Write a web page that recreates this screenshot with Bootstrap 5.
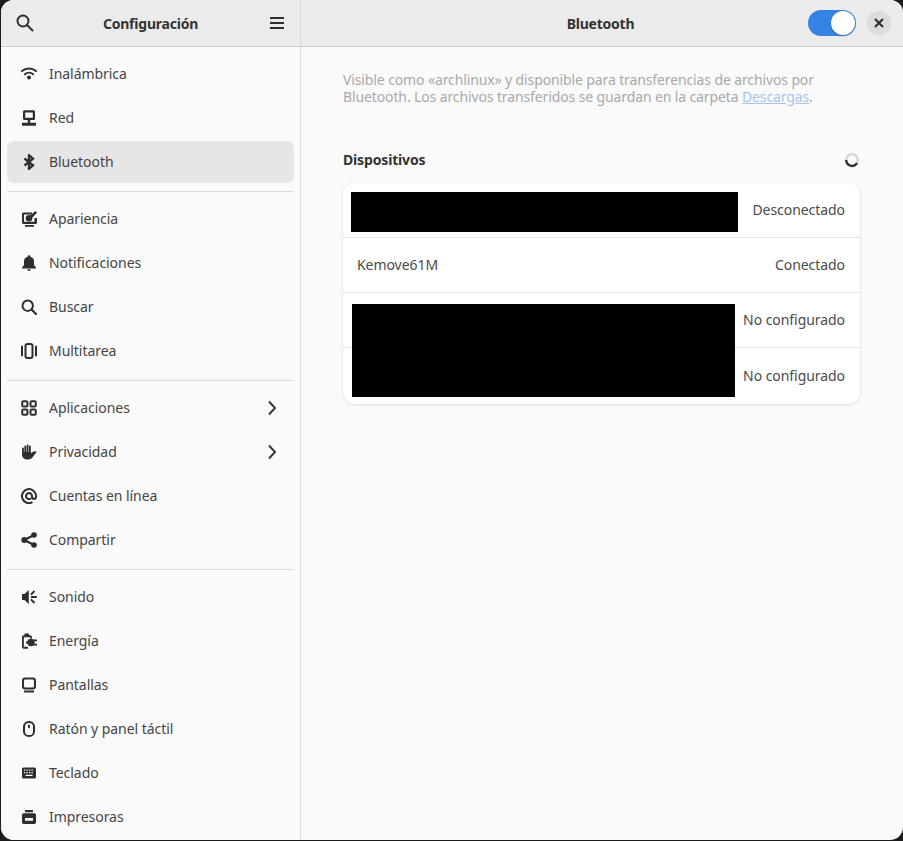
<!DOCTYPE html>
<html lang="es">
<head>
<meta charset="utf-8">
<title>Configuración</title>
<link href="https://cdn.jsdelivr.net/npm/bootstrap@5.3.0/dist/css/bootstrap.min.css" rel="stylesheet">
<style>
html,body{height:100%;margin:0;background:#1c1c1c;overflow:hidden}
body{font-family:"Noto Sans","Liberation Sans",sans-serif;font-size:14px;color:#3d3d3d}
.gwin{height:840px;margin-left:1px;background:#fafafa;border-radius:13px;overflow:hidden}
.side{width:300px;flex:0 0 300px;border-right:1px solid #d9d9d9;background:#fafafa}
.hbar{height:47px;background:#ebebeb;border-bottom:1px solid #d0d0d0;flex:0 0 47px}
.htitle{font-weight:700;color:#333;font-size:14px;letter-spacing:-.22px}
.slist{padding:5px 6px 0 6px}
.srow{height:44px;padding:0 14px;color:#454545;position:relative;letter-spacing:-.05px}
.srow span{padding-bottom:2px}
.srow.sel::before{content:"";position:absolute;left:0;right:0;top:1px;bottom:1px;background:#e6e6e6;border-radius:7px;z-index:0}
.srow>*{position:relative;z-index:1}
.sico{width:16px;height:16px;flex:0 0 16px;margin-right:12px;fill:#2e2e2e;stroke:none}
.schev{width:16px;height:16px;margin-left:auto}
.sline{height:1px;background:#dcdcdc;margin:7px 0 5px 0}
.main{min-width:0}
.mbody{padding:24px 43px 0 42px}
.dtext{color:#a9a9a9;line-height:17px;margin:0;height:34px;letter-spacing:-.12px}
.dtext a{color:#a5c4ee;display:inline-block;line-height:17px}
.dhead{margin-top:44px;height:34px;font-weight:700;color:#333;letter-spacing:-.16px}
.dspin{margin-top:3px}
.dcard{position:relative;border-radius:12px;background:#fff;box-shadow:0 0 1px rgba(0,0,0,.18),0 1px 3px rgba(0,0,0,.1);overflow:hidden;border:0}
.drow{height:55px;padding:0 15px 0 14px;border-bottom:1px solid #e4e4e4;background:#fff;color:#4a4a4a;letter-spacing:-.06px}
.drow span{padding-bottom:2px}
.drow:last-of-type{border-bottom:0;height:56px}
.blk{position:absolute;background:#000}
.blk1{left:8px;top:9px;width:387px;height:40px}
.blk2{left:9px;top:121px;width:383px;height:93px}
.gtog{width:48px;height:26px;border-radius:13px;background:#3584e4;position:relative}
.gtog::after{content:"";position:absolute;right:1px;top:1px;width:24px;height:24px;border-radius:50%;background:#fff;box-shadow:0 1px 2px rgba(0,0,0,.3)}
.gclose{width:24px;height:24px;border-radius:50%;background:#dcdcdc;margin-left:11px;margin-right:12px}
.gtitle{left:0;right:0;text-align:center;position:absolute}
.gtitle2{right:3px}
.hsearch{margin-left:-1px}
</style>
</head>
<body>
<div class="gwin d-flex">
  <aside class="side d-flex flex-column">
    <header class="hbar d-flex align-items-center justify-content-between position-relative px-3">
      <svg class="hsearch" width="18" height="18" viewBox="0 0 18 18" fill="none" stroke="#2e2e2e" stroke-width="2"><circle cx="7" cy="7" r="5.5"/><path d="M11 11l5.500 5.500" stroke-linecap="round"/></svg>
      <span class="htitle gtitle">Configuración</span>
      <svg width="14" height="12" viewBox="0 0 14 12" fill="none" stroke="#2e2e2e" stroke-width="2"><path d="M0 1h14M0 6h14M0 11h14"/></svg>
    </header>
    <div class="slist">
      <div class="srow d-flex align-items-center"><svg class="sico" viewBox="0 0 16 16"><g fill="none" stroke="#2e2e2e" stroke-width="2" stroke-linecap="round"><path d="M1 5C4.800 1.700 11.200 1.700 15 5"/><path d="M3.800 8.200C6.200 6.200 9.800 6.200 12.200 8.200"/></g><circle cx="8" cy="11.500" r="2"/></svg><span>Inalámbrica</span></div>
      <div class="srow d-flex align-items-center"><svg class="sico" viewBox="0 0 16 16"><path fill-rule="evenodd" d="M3.500.3h9A1.500 1.500 0 0 1 14 1.800v6.700A1.500 1.500 0 0 1 12.500 10H9.200v2.800H15v2.900H1v-2.900h5.800V10H3.500A1.500 1.500 0 0 1 2 8.500V1.800A1.500 1.500 0 0 1 3.500.3zM4.200 2.400v5.300h7.600V2.400z"/></svg><span>Red</span></div>
      <div class="srow sel d-flex align-items-center"><svg class="sico" viewBox="0 0 16 16"><path fill="none" stroke="#2e2e2e" stroke-width="2.300" d="M3.500 4.500L12 11.300 8 14.800V1.200l4 3.500-8.500 6.800"/></svg><span>Bluetooth</span></div>
      <div class="sline"></div>
      <div class="srow d-flex align-items-center"><svg class="sico" viewBox="0 0 16 16"><path fill-rule="evenodd" d="M2.500 1.500H11v2H3v7.300h10.500V7H16v4.500a1.500 1.500 0 0 1-1.500 1.500h-12A1.500 1.500 0 0 1 1 11.500v-8.500A1.500 1.500 0 0 1 2.500 1.500zM4 14h9v1.700H4z"/><circle cx="8" cy="7.300" r="3.300"/><path d="M8.500 5.200l5.800-5.200 1.700 1.800-5.600 5.600z"/></svg><span>Apariencia</span></div>
      <div class="srow d-flex align-items-center"><svg class="sico" viewBox="0 0 16 16"><path d="M8 .3a1.400 1.400 0 0 1 1.400 1.400A4.800 4.800 0 0 1 13 6.300v3.700l2 2.500v.9H1v-.9L3 10V6.300A4.800 4.800 0 0 1 6.600 1.700 1.400 1.400 0 0 1 8 .3zM6.300 14.300h3.400a1.700 1.700 0 0 1-3.400 0z"/></svg><span>Notificaciones</span></div>
      <div class="srow d-flex align-items-center"><svg class="sico" viewBox="0 0 16 16"><circle cx="6.700" cy="6.700" r="5.200" fill="none" stroke="#2e2e2e" stroke-width="2"/><path d="M10.500 10.500l4.500 4.500" stroke="#2e2e2e" stroke-width="2.200" stroke-linecap="round"/></svg><span>Buscar</span></div>
      <div class="srow d-flex align-items-center"><svg class="sico" viewBox="0 0 16 16"><rect x="4.500" y="1" width="7" height="14" rx="2" fill="none" stroke="#2e2e2e" stroke-width="2"/><path d="M1 3.500v9M15 3.500v9" stroke="#2e2e2e" stroke-width="2" stroke-linecap="round"/></svg><span>Multitarea</span></div>
      <div class="sline"></div>
      <div class="srow d-flex align-items-center"><svg class="sico" viewBox="0 0 16 16"><g fill="none" stroke="#2e2e2e" stroke-width="2"><rect x="1.200" y="1.200" width="5.300" height="5.300" rx="1.300"/><rect x="9.500" y="1.200" width="5.300" height="5.300" rx="1.300"/><rect x="1.200" y="9.500" width="5.300" height="5.300" rx="1.300"/><rect x="9.500" y="9.500" width="5.300" height="5.300" rx="1.300"/></g></svg><span>Aplicaciones</span><svg class="schev" viewBox="0 0 16 16" fill="none" stroke="#3a3a3a" stroke-width="2"><path d="M5 1.500L11 8l-6 6.500"/></svg></div>
      <div class="srow d-flex align-items-center"><svg class="sico" viewBox="0 0 16 16"><path d="M2 4.500v6M4.300 2.500v8M6.600 1.500v9M8.900 2.500v8" stroke="#2e2e2e" stroke-width="1.800" stroke-linecap="round" fill="none"/><path d="M1.100 8H9.800v1.500l2.400-1.700c1-.7 2.600-.5 3.500.3-1.500 1.500-2.400 3-3.500 4.500C11 14.500 9.500 15.500 7 15.500 3 15.500 1.100 13.500 1.100 10.500z"/></svg><span>Privacidad</span><svg class="schev" viewBox="0 0 16 16" fill="none" stroke="#3a3a3a" stroke-width="2"><path d="M5 1.500L11 8l-6 6.500"/></svg></div>
      <div class="srow d-flex align-items-center"><svg class="sico" viewBox="0 0 16 16"><path fill="none" stroke="#2e2e2e" stroke-width="2" d="M11.500 14.200A7 7 0 1 1 15 8v.6c0 1.300-.9 2.400-2 2.400s-2-1-2-2.400V8a3 3 0 1 0-1 2.300"/></svg><span>Cuentas en línea</span></div>
      <div class="srow d-flex align-items-center"><svg class="sico" viewBox="0 0 16 16"><circle cx="3.300" cy="8" r="3"/><circle cx="13" cy="3" r="2.800"/><circle cx="13" cy="13" r="2.800"/><path d="M3.300 8L13 3M3.300 8L13 13" stroke="#2e2e2e" stroke-width="2.200" fill="none"/></svg><span>Compartir</span></div>
      <div class="sline"></div>
      <div class="srow d-flex align-items-center"><svg class="sico" viewBox="0 0 16 16"><path d="M7.800 1v14L3.500 11H1V5h2.500z"/><path d="M10 7h5.800v2H10zM9.300 5l3.500-3.700 1.400 1.400L10.700 6.300zM9.300 11l3.500 3.700 1.400-1.400-3.500-3.600z"/></svg><span>Sonido</span></div>
      <div class="srow d-flex align-items-center"><svg class="sico" viewBox="0 0 16 16"><rect x="3.500" y=".5" width="4.500" height="3"/><path d="M10 5.500V4.200a1 1 0 0 0-1-1H2.900a1 1 0 0 0-1 1v9.600a1 1 0 0 0 1 1H7" fill="none" stroke="#2e2e2e" stroke-width="1.900"/><circle cx="10" cy="9.500" r="3.700"/><path d="M5 8.600h3v1.800H5zM12 6.500h4v1.800h-4zM12 10.700h4v1.800h-4z"/></svg><span>Energía</span></div>
      <div class="srow d-flex align-items-center"><svg class="sico" viewBox="0 0 16 16"><rect x="2" y="1.500" width="12" height="10" rx="2.300" fill="none" stroke="#2e2e2e" stroke-width="2"/><path d="M3 13.500h10v2H3z"/></svg><span>Pantallas</span></div>
      <div class="srow d-flex align-items-center"><svg class="sico" viewBox="0 0 16 16"><rect x="3" y="1" width="10" height="14" rx="4.600" fill="none" stroke="#2e2e2e" stroke-width="2"/><rect x="7" y="3.600" width="2" height="3.600" rx="1"/></svg><span>Ratón y panel táctil</span></div>
      <div class="srow d-flex align-items-center"><svg class="sico" viewBox="0 0 16 16"><path fill-rule="evenodd" d="M2.500 2.500h11A1.500 1.500 0 0 1 15 4v8a1.500 1.500 0 0 1-1.500 1.500h-11A1.500 1.500 0 0 1 1 12V4a1.500 1.500 0 0 1 1.500-1.500zM3 4.500v1.300h1.300V4.500zm2.500 0v1.300h1.300V4.500zm2.500 0v1.300h1.300V4.500zm2.500 0v1.300h1.300V4.500zM3 7v1.300h1.300V7zm2.500 0v1.300h1.300V7zM8 7v1.300h1.300V7zm2.500 0v1.300h1.300V7zM4.500 9.700V11h7V9.700z"/></svg><span>Teclado</span></div>
      <div class="srow d-flex align-items-center"><svg class="sico" viewBox="0 0 16 16"><path fill-rule="evenodd" d="M4 1h8v2.200H4zM2.700 4.300h10.600A1.700 1.700 0 0 1 15 6v7.300a1.700 1.700 0 0 1-1.700 1.700H2.700A1.700 1.700 0 0 1 1 13.300V6a1.700 1.700 0 0 1 1.700-1.700zM4 9v2.700h8V9z"/></svg><span>Impresoras</span></div>
    </div>
  </aside>
  <main class="main flex-grow-1 d-flex flex-column">
    <header class="hbar d-flex align-items-center justify-content-end position-relative">
      <span class="htitle gtitle gtitle2">Bluetooth</span>
      <div class="gtog"></div>
      <div class="gclose d-flex align-items-center justify-content-center"><svg width="10" height="10" viewBox="0 0 10 10" fill="none" stroke="#2a2a2a" stroke-width="2"><path d="M1 1l8 8M9 1l-8 8"/></svg></div>
    </header>
    <section class="mbody">
      <div class="dtext"><div>Visible como «archlinux» y disponible para transferencias de archivos por</div><div>Bluetooth. Los archivos transferidos se guardan en la carpeta <a href="#">Descargas</a>.</div></div>
      <div class="dhead d-flex justify-content-between align-items-start">
        <span>Dispositivos</span>
        <svg class="dspin" width="16" height="16" viewBox="0 0 16 16" fill="none" stroke-width="2.400"><circle cx="8" cy="8" r="5.800" stroke="#d6d6d6"/><path d="M2.200 8a5.800 5.800 0 0 0 10.800 3" stroke="#333"/></svg>
      </div>
      <div class="dcard list-group">
        <div class="drow d-flex align-items-center justify-content-between"><span></span><span>Desconectado</span></div>
        <div class="drow d-flex align-items-center justify-content-between"><span>Kemove61M</span><span>Conectado</span></div>
        <div class="drow d-flex align-items-center justify-content-between"><span></span><span>No configurado</span></div>
        <div class="drow d-flex align-items-center justify-content-between"><span></span><span>No configurado</span></div>
        <section class="blk blk1"></section>
        <section class="blk blk2"></section>
      </div>
    </section>
  </main>
</div>
<script src="https://cdn.jsdelivr.net/npm/bootstrap@5.3.0/dist/js/bootstrap.bundle.min.js"></script>
</body>
</html>
